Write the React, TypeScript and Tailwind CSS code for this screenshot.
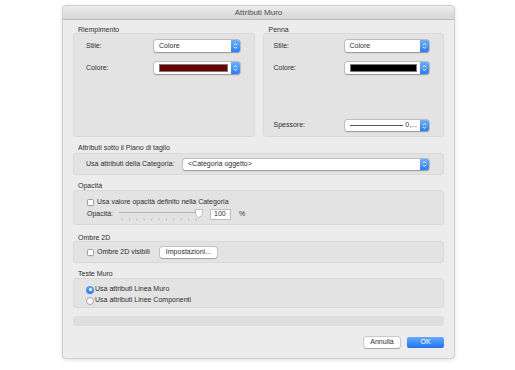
import type { ReactNode } from 'react'

function Arrows() {
  return (
    <svg width="5" height="8" viewBox="0 0 5 8" fill="none" stroke="white" strokeWidth="0.9">
      <path d="M1 3.2 L2.5 1.6 L4 3.2" />
      <path d="M1 4.8 L2.5 6.4 L4 4.8" />
    </svg>
  )
}

function Popup({ className, children }: { className: string; children: ReactNode }) {
  return (
    <div
      className={`flex items-stretch rounded-[2px] bg-white shadow-[0_0_0_0.5px_rgba(0,0,0,0.25),0_0.5px_1.5px_rgba(0,0,0,0.25)] ${className}`}
    >
      <div className="flex min-w-0 flex-1 items-center pl-[5px] pr-[3px]">{children}</div>
      <div className="flex w-[9px] items-center justify-center rounded-r-[2px] bg-gradient-to-b from-[#6cb0fb] to-[#2b7df2]">
        <Arrows />
      </div>
    </div>
  )
}

function Checkbox() {
  return <div className="h-[7px] w-[7px] shrink-0 rounded-[1.5px] border-[0.5px] border-[#9d9d9d] bg-white shadow-[0_0.5px_0.5px_rgba(0,0,0,0.1)]" />
}

function Radio({ on }: { on?: boolean }) {
  if (on) {
    return (
      <div className="flex h-[8px] w-[8px] shrink-0 items-center justify-center rounded-full bg-gradient-to-b from-[#5aa6fb] to-[#2a7bf1]">
        <div className="h-[3px] w-[3px] rounded-full bg-white" />
      </div>
    )
  }
  return <div className="h-[8px] w-[8px] shrink-0 rounded-full border-[0.5px] border-[#a3a3a3] bg-white" />
}

function Slider() {
  const ticks = Array.from({ length: 11 }, (_, i) => 5 + i * 7.4)
  return (
    <svg width="88" height="12" viewBox="0 0 88 12">
      <line x1="2" y1="3.5" x2="82" y2="3.5" stroke="#b3b3b3" strokeWidth="1" />
      {ticks.map((x) => (
        <line key={x} x1={x} y1="9.5" x2={x} y2="11.5" stroke="#a8a8a8" strokeWidth="0.7" />
      ))}
      <path d="M78.5 0.5 H85.5 V5.5 L82 9 L78.5 5.5 Z" fill="white" stroke="#9a9a9a" strokeWidth="0.6" />
    </svg>
  )
}

export default function App() {
  return (
    <div
      className="h-[370px] w-[515px] bg-white pt-[5px] text-[7px] text-[#2e2e2e]"
      style={{ fontFamily: '"Liberation Sans", Arial, sans-serif' }}
    >
      <div className="ml-[62px] w-[393px] rounded-[4px] border border-[#cfcfcf] bg-[#ececec] shadow-[0_1px_4px_rgba(0,0,0,0.12)]">
        {/* Title bar */}
        <div className="flex h-[14px] items-center justify-center rounded-t-[4px] border-b border-[#bdbdbd] bg-gradient-to-b from-[#ececec] to-[#d6d6d6] text-[8px] text-[#4a4a4a]">
          Attributi Muro
        </div>

        <div className="px-[10px] pt-[6px] pb-[10px]">
          {/* Riempimento / Penna */}
          <div className="grid grid-cols-2 gap-[8px]">
            <div>
              <div className="h-[7px] pl-[5px] leading-[7px]">Riempimento</div>
              <div className="flex h-[104px] flex-col gap-[10px] rounded-[3px] border-[0.5px] border-[#d9d9d9] bg-[#e3e3e3] pt-[6px] pl-[12px] pr-[14px]">
                <div className="flex h-[12px] items-center">
                  <span className="w-[68px]">Stile:</span>
                  <Popup className="h-[12px] flex-1">Colore</Popup>
                </div>
                <div className="flex h-[12px] items-center">
                  <span className="w-[68px]">Colore:</span>
                  <Popup className="h-[12px] flex-1">
                    <div className="h-[8px] w-full border-[0.5px] border-[#7a7a7a] bg-[#6a0000]" />
                  </Popup>
                </div>
              </div>
            </div>
            <div>
              <div className="h-[7px] pl-[6px] leading-[7px]">Penna</div>
              <div className="flex h-[104px] flex-col gap-[10px] rounded-[3px] border-[0.5px] border-[#d9d9d9] bg-[#e3e3e3] pt-[6px] pb-[5px] pl-[10px] pr-[14px]">
                <div className="flex h-[12px] items-center">
                  <span className="w-[71px]">Stile:</span>
                  <Popup className="h-[12px] flex-1">Colore</Popup>
                </div>
                <div className="flex h-[12px] items-center">
                  <span className="w-[71px]">Colore:</span>
                  <Popup className="h-[12px] flex-1">
                    <div className="h-[8px] w-full border-[0.5px] border-[#7a7a7a] bg-black" />
                  </Popup>
                </div>
                <div className="mt-auto flex h-[11px] items-center">
                  <span className="w-[71px]">Spessore:</span>
                  <Popup className="h-[11px] flex-1">
                    <div className="h-[1px] flex-1 bg-[#555]" />
                    <span className="ml-[2px]">0,...</span>
                  </Popup>
                </div>
              </div>
            </div>
          </div>

          {/* Attributi sotto il Piano di taglio */}
          <div className="mt-[7px] h-[7px] pl-[5px] leading-[7px]">Attributi sotto il Piano di taglio</div>
          <div className="mt-[2px] flex h-[22px] items-center rounded-[3px] border-[0.5px] border-[#d9d9d9] bg-[#e3e3e3] pl-[12px] pr-[14px]">
            <span className="w-[97px] whitespace-nowrap">Usa attributi della Categoria:</span>
            <Popup className="h-[11px] flex-1">&lt;Categoria oggetto&gt;</Popup>
          </div>

          {/* Opacità */}
          <div className="mt-[7px] h-[7px] pl-[5px] leading-[7px]">Opacità</div>
          <div className="mt-[1px] h-[35px] rounded-[3px] border-[0.5px] border-[#d9d9d9] bg-[#e3e3e3] pt-[8px] pl-[13px]">
            <div className="flex h-[7px] items-center gap-[3px]">
              <Checkbox />
              <span>Usa valore opacità definito nella Categoria</span>
            </div>
            <div className="mt-[3px] flex h-[11px] items-center">
              <span className="w-[30px]">Opacità:</span>
              <Slider />
              <div className="ml-[5px] flex h-[11px] w-[21px] items-center border-[0.5px] border-[#bdbdbd] bg-white pl-[3px]">
                100
              </div>
              <span className="ml-[8px]">%</span>
            </div>
          </div>

          {/* Ombre 2D */}
          <div className="mt-[9px] h-[7px] pl-[5px] leading-[7px]">Ombre 2D</div>
          <div className="flex h-[22px] items-center rounded-[3px] border-[0.5px] border-[#d9d9d9] bg-[#e3e3e3] pl-[13px]">
            <Checkbox />
            <span className="ml-[3px]">Ombre 2D visibili</span>
            <div className="ml-[10px] flex h-[11px] w-[57px] items-center justify-center rounded-[2px] bg-white shadow-[0_0_0_0.5px_rgba(0,0,0,0.25),0_0.5px_1px_rgba(0,0,0,0.2)]">
              Impostazioni...
            </div>
          </div>

          {/* Teste Muro */}
          <div className="mt-[7px] h-[7px] pl-[5px] leading-[7px]">Teste Muro</div>
          <div className="mt-[1px] h-[30px] rounded-[3px] border-[0.5px] border-[#d9d9d9] bg-[#e3e3e3] pt-[5px] pl-[12px]">
            <div className="flex h-[11px] items-center gap-[1px]">
              <Radio on />
              <span>Usa attributi Linea Muro</span>
            </div>
            <div className="flex h-[11px] items-center gap-[1px]">
              <Radio />
              <span>Usa attributi Linee Componenti</span>
            </div>
          </div>

          {/* empty strip */}
          <div className="mt-[8px] h-[10px] rounded-[3px] bg-[#dfdfdf]" />

          {/* Buttons */}
          <div className="mt-[11px] flex justify-end gap-[7px]">
            <div className="flex h-[11px] w-[36px] items-center justify-center rounded-[2px] bg-white shadow-[0_0_0_0.5px_rgba(0,0,0,0.25),0_0.5px_1px_rgba(0,0,0,0.2)]">
              Annulla
            </div>
            <div className="flex h-[11px] w-[37px] items-center justify-center rounded-[2px] bg-gradient-to-b from-[#64acfb] to-[#1f72f0] text-white">
              OK
            </div>
          </div>
        </div>
      </div>
    </div>
  )
}
